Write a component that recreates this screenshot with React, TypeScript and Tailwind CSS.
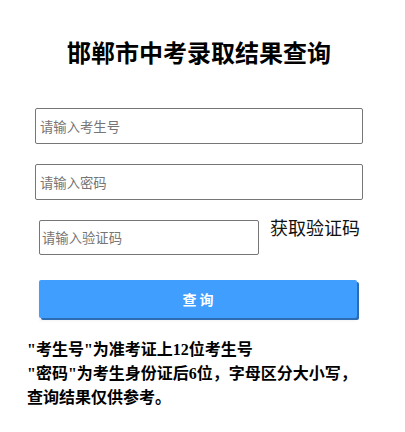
import React from 'react';

const cjk = '"Noto Sans CJK SC", "Noto Sans", sans-serif';

const App: React.FC = () => {
  return (
    <div className="w-[405px] h-[432px] bg-white overflow-hidden" style={{ fontFamily: cjk }}>
      <div className="ml-[35px] w-[328px] pt-[36px] flex flex-col">
        <h1 className="text-center text-[24px] leading-[32px] font-bold text-black">邯郸市中考录取结果查询</h1>

        <input
          type="text"
          placeholder="请输入考生号"
          className="mt-[40px] h-[36px] w-full border border-[#767676] rounded-[2px] px-[4px] text-[13.33px] placeholder:text-[#757575] outline-none"
        />
        <input
          type="password"
          placeholder="请输入密码"
          className="mt-[20px] h-[36px] w-full border border-[#767676] rounded-[2px] px-[4px] text-[13.33px] placeholder:text-[#757575] outline-none"
        />

        <div className="mt-[20px] ml-[4px] flex items-start gap-[11px]">
          <input
            type="text"
            placeholder="请输入验证码"
            className="h-[35px] w-[220px] border border-[#767676] rounded-[2px] px-[2px] text-[13.33px] placeholder:text-[#757575] outline-none"
          />
          <span className="-mt-[3px] text-[18px] leading-[20px] text-[#111]">获取验证码</span>
        </div>

        <button className="mt-[25px] ml-[4px] w-[318px] h-[38px] bg-[#409eff] text-white text-[14px] font-bold rounded-[2px] shadow-[2px_2px_0_#2b6cb3,0_3px_3px_rgba(0,0,0,0.05)]">
          查 询
        </button>
      </div>

      <div
        className="mt-[20px] pl-[27px] text-[16px] leading-[24px] font-bold text-black"
        style={{ fontFamily: '"Liberation Serif", "Noto Sans CJK SC", serif' }}
      >
        <p>"考生号"为准考证上12位考生号</p>
        <p>"密码"为考生身份证后6位，字母区分大小写，</p>
        <p>查询结果仅供参考。</p>
      </div>
    </div>
  );
};

export default App;
